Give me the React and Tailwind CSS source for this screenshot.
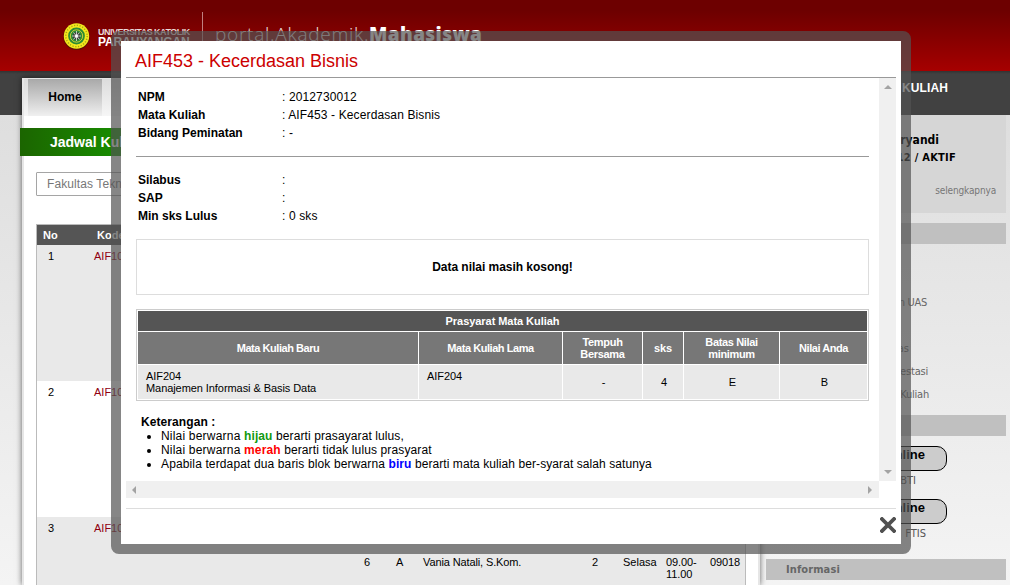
import React from 'react';

const courses = [
  { no: 1, code: 'AIF103', shade: 'bg-[#e9e9e9]' },
  { no: 2, code: 'AIF104', shade: 'bg-white' },
  { no: 3, code: 'AIF105', shade: 'bg-[#e9e9e9]' },
];

function Logo() {
  return (
    <svg className="mt-[23px] h-[27px] w-[27px]" viewBox="0 0 27 27">
      <circle cx="13.5" cy="13.8" r="13.2" fill="#3b1a05" opacity=".55" />
      <circle cx="13.5" cy="13" r="12.7" fill="#f2e81c" />
      <circle cx="13.5" cy="13" r="10.7" fill="none" stroke="#a8a015" strokeWidth="1.4" strokeDasharray="1.2 1.6" />
      <circle cx="13.5" cy="13" r="8.4" fill="#2c8b32" />
      <circle cx="13.5" cy="13" r="6.2" fill="none" stroke="#c9cf3a" strokeWidth="1" />
      <circle cx="13.5" cy="13" r="3.8" fill="#3a3f3a" />
      <path d="M13.5 8v10M9 13h9M10.5 9.5l6 7M16.5 9.5l-6 7" stroke="#d0d0d0" strokeWidth=".9" />
      <circle cx="13.5" cy="13" r="1.5" fill="#fff" />
    </svg>
  );
}

function Header() {
  return (
    <header className="flex h-[71px] bg-gradient-to-b from-[#6d0000] from-15% to-[#a60000] pl-[63px]">
      <Logo />
      <div className="ml-[8px] mt-[27px] w-[104px] whitespace-nowrap font-bold text-[#e9dada]">
        <div className="text-[9px] leading-[10px] tracking-[-0.52px]">UNIVERSITAS KATOLIK</div>
        <div className="text-[12px] leading-[10px] tracking-[-0.1px] text-white">PARAHYANGAN</div>
      </div>
      <div className="mt-[12px] h-[48px] w-px bg-[#c08080]" />
      <div className="ml-[12px] mt-[20px] flex whitespace-nowrap font-['Open_Sans','Noto_Sans',sans-serif] text-[19px] leading-[28px] text-[#f0e6e6]">
        <span className="w-[154px] font-light tracking-[0.75px]">portal.Akademik.</span>
        <span className="font-extrabold tracking-[0.4px] text-white">Mahasiswa</span>
      </div>
    </header>
  );
}

function Schedule() {
  return (
    <section className="mt-[7px] w-[738px] shrink-0 border-x-2 border-t border-[#e6e6e6] bg-white shadow-[0_0_6px_rgba(0,0,0,0.6)]">
      <nav className="flex h-[37px] bg-gradient-to-b from-[#dcdcdc] to-[#f6f6f6] pl-[4px]">
        <a className="flex h-[37px] w-[74px] items-center justify-center bg-gradient-to-b from-[#a9a9a9] to-[#f0f0f0] pb-[2px] text-[12px] font-bold">Home</a>
      </nav>
      <h2 className="-ml-[4px] mt-[12px] h-[28px] w-[600px] bg-gradient-to-r from-[#1b6500] to-[#149600] to-20% pl-[30px] text-[14px] font-bold leading-[28px] text-white">
        Jadwal Kuliah
      </h2>
      <div className="ml-[12px] mt-[16px] h-[24px] w-[300px] rounded-[1px] border border-[#a5a5a5] pl-[10px] text-[12px] leading-[22px] tracking-[0.1px] text-[#777]">
        Fakultas Teknologi Informasi
      </div>
      <div className="ml-[12px] mt-[28px] w-[710px] border border-[#bbb] text-[11px]">
        <div className="flex h-[20px] bg-[#555] font-bold leading-[21px] text-white">
          <span className="w-[60px] pl-[6px]">No</span>
          <span>Kode</span>
        </div>
        {courses.map((c) => (
          <div key={c.no} className={`flex h-[136px] pt-[5px] leading-[12px] ${c.shade}`}>
            <span className="w-[57px] pl-[11px]">{c.no}</span>
            <span className="w-[270px] text-[#900010]">{c.code}</span>
            {c.no === 3 && (
              <div className="flex pt-[34px]">
                <span className="w-[32px]">6</span>
                <span className="w-[27px]">A</span>
                <span className="w-[169px] tracking-[-0.12px]">Vania Natali, S.Kom.</span>
                <span className="w-[31px]">2</span>
                <span className="w-[43px]">Selasa</span>
                <span className="w-[44px] tracking-[-0.1px]">09.00-<br />11.00</span>
                <span className="tracking-[-0.1px]">09018</span>
              </div>
            )}
          </div>
        ))}
      </div>
    </section>
  );
}

function OnlineStatus({ label, className }) {
  return (
    <div className="mb-[9px] h-[44px]">
      <div className="flex h-[25px] w-[151px] justify-end rounded-[10px] border border-black bg-[#ccc] pr-[21px] text-[13px] font-bold leading-[15px]">
        Online
      </div>
      <div className={`mt-[2px] w-[131px] text-right font-['DejaVu_Sans_Condensed','DejaVu_Sans',sans-serif] text-[11px] leading-[15px] text-[#555] ${className}`}>{label}</div>
    </div>
  );
}

function Sidebar() {
  return (
    <aside className="ml-[6px] w-[240px] shrink-0 font-['DejaVu_Sans_Condensed','DejaVu_Sans',sans-serif]">
      <div className="h-[44px] w-[182px] pt-[9px] text-right font-['Liberation_Sans',Arial,sans-serif] text-[12px] font-bold leading-[16px] tracking-[0.1px] text-white">JADWAL KULIAH</div>
      <div className="h-[98px] bg-[#d6d6d6] pt-[16px] text-[12px] font-bold leading-[18px]">
        <div className="w-[173px] text-right">Haryandi</div>
        <div className="w-[190px] text-right text-[11px] tracking-[0.25px]">2012730012 / AKTIF</div>
        <div className="mt-[16px] pr-[10px] text-right text-[10px] font-normal leading-[15px] tracking-[-0.15px] text-[#777]">selengkapnya</div>
      </div>
      <div className="mt-[10px] h-[21px] bg-[#c0c0c0]" />
      <ul className="h-[171px] pt-[47px] text-right text-[11px] leading-[23px] text-[#666]">
        <li className="w-[161px] tracking-[-0.3px]">Jadwal UTS dan UAS</li>
        <li className="h-[23px]" />
        <li className="w-[143px]">Kelas</li>
        <li className="w-[162px] tracking-[-0.2px]">Prestasi</li>
        <li className="w-[163px] tracking-[-0.2px]">Mata Kuliah</li>
      </ul>
      <div className="h-[21px] bg-[#c0c0c0]" />
      <div className="ml-[30px] mt-[10px] font-['Liberation_Sans',Arial,sans-serif]">
        <OnlineStatus label="BTI" className="pr-[11px]" />
        <OnlineStatus label="FTIS" className="pr-[1px]" />
      </div>
      <div className="mt-[16px] h-[21px] bg-[#c0c0c0] pl-[20px] text-[11px] font-bold leading-[22px] tracking-[0.1px] text-[#666]">Informasi</div>
    </aside>
  );
}

function Field({ label, children }) {
  return (
    <div className="flex h-[18px] items-center">
      <dt className="w-[144px] font-bold">{label}</dt>
      <dd className="tracking-[0.12px]">: {children}</dd>
    </div>
  );
}

function Arrow({ d }) {
  return <svg className="h-[8px] w-[8px]" viewBox="0 0 8 8"><path d={d} fill="#a3a3a3" /></svg>;
}

function HeadCell({ children, tracking = 'tracking-[-0.45px]' }) {
  return <div className={`flex items-center justify-center bg-[#777] text-center font-bold text-white ${tracking}`}>{children}</div>;
}

function ValueCell({ children }) {
  return <div className="flex items-center justify-center bg-[#e9e9e9] pl-[2px]">{children}</div>;
}

function Prerequisites() {
  return (
    <div className="mt-[14px] h-[92px] border border-[#ccc] p-px text-[11px] leading-[12px]">
      <div className="grid grid-cols-[280px_143px_79px_40px_95px_87px] grid-rows-[20px_32px_34px] gap-px">
        <div className="col-span-6 flex items-center justify-center bg-[#555] font-bold tracking-[-0.05px] text-white">Prasyarat Mata Kuliah</div>
        <HeadCell>Mata Kuliah Baru</HeadCell>
        <HeadCell>Mata Kuliah Lama</HeadCell>
        <HeadCell tracking="tracking-[-0.3px]">Tempuh<br />Bersama</HeadCell>
        <HeadCell tracking="tracking-[-0.1px]">sks</HeadCell>
        <HeadCell tracking="tracking-[-0.35px]">Batas Nilai<br />minimum</HeadCell>
        <HeadCell>Nilai Anda</HeadCell>
        <div className="bg-[#e9e9e9] pl-[8px] pt-[5px] tracking-[-0.07px]">AIF204<br />Manajemen Informasi &amp; Basis Data</div>
        <div className="bg-[#e9e9e9] pl-[8px] pt-[5px] tracking-[-0.07px]">AIF204</div>
        <ValueCell>-</ValueCell>
        <ValueCell>4</ValueCell>
        <ValueCell>E</ValueCell>
        <ValueCell>B</ValueCell>
      </div>
    </div>
  );
}

function Modal() {
  return (
    <div className="absolute left-[111px] top-[31px] h-[523px] w-[800px] rounded-[8px] border-[10px] border-[rgba(82,82,82,0.7)]">
      <div className="flex h-[503px] flex-col bg-white px-[5px] text-[12px]">
        <h1 className="h-[37px] shrink-0 border-b border-[#999] pl-[9px] text-[18px] leading-[40px] text-[#c00]">AIF453 - Kecerdasan Bisnis</h1>
        <div className="flex h-[403px] shrink-0">
          <div className="w-[753px] px-[10px] pt-[10px]">
            <dl className="pl-[2px]">
              <Field label="NPM">2012730012</Field>
              <Field label="Mata Kuliah">AIF453 - Kecerdasan Bisnis</Field>
              <Field label="Bidang Peminatan">-</Field>
            </dl>
            <hr className="mb-[14px] mt-[14px] border-[#999]" />
            <dl className="pl-[2px]">
              <Field label="Silabus" />
              <Field label="SAP" />
              <Field label="Min sks Lulus">0 sks</Field>
            </dl>
            <div className="mt-[14px] flex h-[56px] items-center justify-center border border-[#ddd] font-bold tracking-[-0.03px]">Data nilai masih kosong!</div>
            <Prerequisites />
            <div className="pl-[5px] pt-[14px] leading-[14px]">
              <div className="font-bold tracking-[0.08px]">Keterangan :</div>
              <ul className="list-disc pl-[20px]">
                <li className="tracking-[0.1px]"><span className="tracking-[0.2px]">Nilai berwarna </span><b className="text-[#119911]">hijau</b> berarti prasayarat lulus,</li>
                <li className="tracking-[0.12px]"><span className="tracking-[0.2px]">Nilai berwarna </span><b className="text-[#f00]">merah</b> berarti tidak lulus prasyarat</li>
                <li className="tracking-[0.08px]"><span className="tracking-[0.13px]">Apabila terdapat dua baris blok berwarna </span><b className="text-[#00f]">biru</b> berarti mata kuliah ber-syarat salah satunya</li>
              </ul>
            </div>
          </div>
          <div className="flex w-[17px] flex-col items-center justify-between bg-[#f0f0f0] py-[5px]">
            <Arrow d="M0 6L4 2L8 6z" />
            <Arrow d="M0 2L4 6L8 2z" />
          </div>
        </div>
        <div className="flex h-[17px] w-[753px] shrink-0 items-center justify-between bg-[#f0f0f0] px-[5px]">
          <Arrow d="M5 0L1 4L5 8z" />
          <Arrow d="M2 0L6 4L2 8z" />
        </div>
        <div className="mt-[10px] flex justify-end border-t border-[#ddd] pt-[8px]">
          <svg className="h-[16px] w-[16px]" viewBox="0 0 16 16">
            <path d="M2 2L14 14M14 2L2 14" stroke="#505050" strokeWidth="3.8" strokeLinecap="square" />
          </svg>
        </div>
      </div>
    </div>
  );
}

export default function App() {
  return (
    <div className="relative h-[585px] w-[1010px] overflow-hidden font-['Liberation_Sans',Arial,sans-serif] text-black">
      <Header />
      <main className="flex h-[514px] overflow-hidden bg-[linear-gradient(#333_0,#414141_3px,#414141_44px,#dedede_44px,#f4f4f4_100%)] pl-[22px]">
        <Schedule />
        <Sidebar />
      </main>
      <Modal />
    </div>
  );
}
